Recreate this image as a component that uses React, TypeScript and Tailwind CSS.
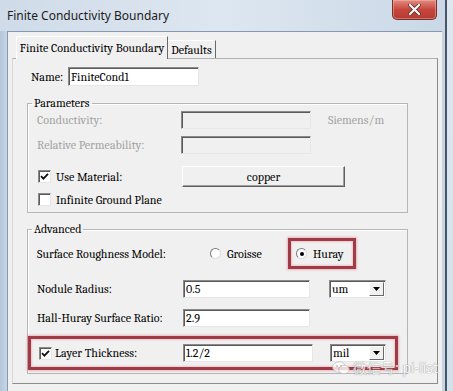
import React from "react";

const Sunken = ({ w, h, disabled, children }: { w: string; h: string; disabled?: boolean; children?: React.ReactNode }) => (
  <div
    className={`${w} ${h} flex items-center pl-[2px] border border-t-[#8a8a8a] border-l-[#8a8a8a] border-r-[#e6e6e6] border-b-[#e6e6e6] shadow-[inset_1px_1px_0_#5a5a5a] ${
      disabled ? "bg-[#f0f0f0]" : "bg-white"
    } text-[12px] leading-none text-black`}
  >
    {children}
  </div>
);

const Checkbox = ({ checked }: { checked?: boolean }) => (
  <div className="w-[13px] h-[13px] shrink-0 bg-white border border-t-[#8a8a8a] border-l-[#8a8a8a] border-r-[#e6e6e6] border-b-[#e6e6e6] shadow-[inset_1px_1px_0_#5a5a5a] flex items-center justify-center">
    {checked && (
      <svg width="9" height="9" viewBox="0 0 9 9">
        <path d="M1 4.2 L3.4 6.6 L8 1.8" stroke="#111" strokeWidth="1.8" fill="none" />
      </svg>
    )}
  </div>
);

const Radio = ({ on }: { on?: boolean }) => (
  <div className="w-[11px] h-[11px] shrink-0 rounded-full bg-white border border-t-[#7d7d7d] border-l-[#7d7d7d] border-r-[#dcdcdc] border-b-[#dcdcdc] flex items-center justify-center">
    {on && <div className="w-[4px] h-[4px] rounded-full bg-black" />}
  </div>
);

const Select = ({ w, h, value }: { w: string; h: string; value: string }) => (
  <div className={`${w} ${h} flex items-stretch bg-white border border-t-[#8a8a8a] border-l-[#8a8a8a] border-r-[#e6e6e6] border-b-[#e6e6e6] shadow-[inset_1px_1px_0_#5a5a5a]`}>
    <span className="flex-1 pl-[2px] flex items-center text-[12px] leading-none text-black">{value}</span>
    <div className="w-[15px] my-[1px] mr-[1px] bg-[#f0f0f0] border border-t-white border-l-white border-r-[#696969] border-b-[#696969] flex items-center justify-center">
      <svg width="7" height="4" viewBox="0 0 7 4">
        <path d="M0 0 H7 L3.5 4 Z" fill="#000" />
      </svg>
    </div>
  </div>
);

const Legend = ({ children }: { children: React.ReactNode }) => (
  <legend className="ml-[4px] px-[2px] text-[12px] leading-[14px] text-black">{children}</legend>
);

export default function App() {
  return (
    <div className="w-[453px] h-[391px] overflow-hidden relative flex bg-[#cbd8e6] font-serif">
      <div className="w-[445px] flex flex-col">
        {/* Title bar */}
        <div className="h-[31px] shrink-0 flex items-center pl-[7px] bg-gradient-to-r from-[#cfdbe8] via-[#dde7f1] to-[#cad8e6]">
          <span className="font-sans text-[12px] text-[#1c1c1c] leading-none">
            Finite Conductivity Boundary
          </span>
          <div className="ml-auto mr-[8px] self-start w-[45px] h-[20px] rounded-b-[5px] border border-t-0 border-[#7a2f2f] bg-gradient-to-b from-[#e08a80] via-[#c8473d] to-[#b53a33] flex items-center justify-center shadow-[inset_0_0_0_1px_rgba(255,200,190,0.4)]">
            <svg width="13" height="11" viewBox="0 0 13 11">
              <path d="M2 1 L11 10 M11 1 L2 10" stroke="#4a2020" strokeWidth="3.6" strokeLinecap="round" />
              <path d="M2 1 L11 10 M11 1 L2 10" stroke="#f4f4f4" strokeWidth="2.4" strokeLinecap="round" />
            </svg>
          </div>
        </div>

        <div className="flex flex-1">
          <div className="w-[7px] bg-gradient-to-r from-[#b4c6da] to-[#c7d6e5]" />
          {/* Client area */}
          <div className="w-[435px] bg-[#f0f0f0] border-l border-t border-[#8799ae] pt-[4px] pl-[4px]">
            {/* Tabs */}
            <div className="flex items-end pl-[4px] relative z-10 -mb-[1px]">
              <div className="w-[152px] h-[23px] bg-[#f0f0f0] border-t border-l border-white border-r border-r-[#696969] rounded-tl-[2px] flex items-center justify-center text-[12px] leading-none text-black">
                Finite Conductivity Boundary
              </div>
              <div className="w-[48px] h-[18px] mb-[1px] border-t border-white border-r border-r-[#696969] flex items-center justify-center text-[12px] leading-none text-black">
                Defaults
              </div>
            </div>

            {/* Panel */}
            <div className="w-[426px] border border-t-[#b0b0b0] border-l-[#d8d8d8] border-r-[#8c8c8c] border-b-[#8c8c8c] bg-[#f0f0f0] pt-[8px] pb-[9px]">
              <div className="flex items-center h-[19px] pl-[18px]">
                <span className="w-[37px] text-[12px] leading-none text-black">Name:</span>
                <Sunken w="w-[131px]" h="h-[19px]">FiniteCond1</Sunken>
              </div>

              {/* Parameters */}
              <fieldset className="ml-[14px] mt-[10px] w-[381px] border border-[#b6b6b6] shadow-[inset_1px_1px_0_#ffffff]">
                <Legend>Parameters</Legend>
                <div className="pl-[9px] pb-[6px] flex flex-col">
                  <div className="mt-[1px] h-[18px] flex items-center">
                    <span className="w-[144px] text-[12px] leading-none text-[#a3a3a3]">Conductivity:</span>
                    <Sunken w="w-[130px]" h="h-[18px]" disabled />
                    <span className="ml-[17px] text-[12px] leading-none text-[#a3a3a3]">Siemens/m</span>
                  </div>
                  <div className="mt-[7px] h-[17px] flex items-center">
                    <span className="w-[144px] text-[12px] leading-none text-[#a3a3a3]">Relative Permeability:</span>
                    <Sunken w="w-[130px]" h="h-[18px]" disabled />
                  </div>
                  <div className="mt-[13px] h-[21px] flex items-center">
                    <div className="w-[145px] flex items-center pl-[1px]">
                      <Checkbox checked />
                      <span className="ml-[5px] text-[12px] leading-none text-black">Use Material:</span>
                    </div>
                    <div className="w-[163px] h-[21px] bg-[#f0f0f0] border border-t-white border-l-white border-r-[#5f5f5f] border-b-[#5f5f5f] shadow-[inset_-1px_-1px_0_#a0a0a0] flex items-center justify-center text-[12px] leading-none text-black">
                      copper
                    </div>
                  </div>
                  <div className="mt-[6px] h-[13px] flex items-center pl-[1px]">
                    <Checkbox />
                    <span className="ml-[5px] text-[12px] leading-none text-black">Infinite Ground Plane</span>
                  </div>
                </div>
              </fieldset>

              {/* Advanced */}
              <fieldset className="ml-[14px] mt-[9px] w-[381px] border border-[#b6b6b6] shadow-[inset_1px_1px_0_#ffffff]">
                <Legend>Advanced</Legend>
                <div className="pl-[9px] pb-[3px] flex flex-col">
                  <div className="mt-[2px] h-[31px] flex items-center">
                    <span className="w-[173px] text-[12px] leading-none text-black">Surface Roughness Model:</span>
                    <div className="w-[78px] flex items-center">
                      <Radio />
                      <span className="ml-[6px] text-[12px] leading-none text-black">Groisse</span>
                    </div>
                    <div className="w-[68px] h-[31px] border-[3px] border-[#a13a45] shadow-[0_0_2px_1px_rgba(214,120,130,0.45),inset_0_0_2px_1px_rgba(214,120,130,0.35)] flex items-center pl-[5px]">
                      <Radio on />
                      <span className="ml-[6px] text-[12px] leading-none text-black">Huray</span>
                    </div>
                  </div>
                  <div className="mt-[11px] h-[18px] flex items-center">
                    <span className="w-[146px] text-[12px] leading-none text-black">Nodule Radius:</span>
                    <Sunken w="w-[127px]" h="h-[18px]">0.5</Sunken>
                    <div className="ml-[19px]">
                      <Select w="w-[57px]" h="h-[18px]" value="um" />
                    </div>
                  </div>
                  <div className="mt-[11px] h-[17px] flex items-center">
                    <span className="w-[146px] text-[12px] leading-none text-black">Hall-Huray Surface Ratio:</span>
                    <Sunken w="w-[127px]" h="h-[18px]">2.9</Sunken>
                  </div>
                  <div className="mt-[10px] -ml-[9px] w-[370px] h-[34px] border-[3px] border-[#a13a45] shadow-[0_0_2px_1px_rgba(214,120,130,0.45),inset_0_0_2px_1px_rgba(214,120,130,0.35)] flex items-center pl-[8px]">
                    <div className="w-[144px] flex items-center">
                      <Checkbox checked />
                      <span className="ml-[3px] text-[12px] leading-none text-black">Layer Thickness:</span>
                    </div>
                    <Sunken w="w-[130px]" h="h-[18px]">1.2/2</Sunken>
                    <div className="ml-[17px]">
                      <Select w="w-[56px]" h="h-[18px]" value="mil" />
                    </div>
                  </div>
                </div>
              </fieldset>
            </div>
          </div>
          <div className="w-[3px] bg-[#c6d4e3]" />
        </div>
      </div>
      <div className="w-[2px] bg-[#46566a]" />
      <div className="w-[6px] bg-gradient-to-b from-[#dfe7ef] to-[#d5e0ea]" />

      {/* Watermark */}
      <div className="absolute left-[332px] top-[361px] flex items-center gap-[3px] opacity-80 pointer-events-none">
        <svg width="18" height="14" viewBox="0 0 18 14">
          <ellipse cx="7" cy="6" rx="6.5" ry="5.2" fill="#ffffff" stroke="#b8b8b8" strokeWidth="0.8" />
          <ellipse cx="12" cy="8.5" rx="5.3" ry="4.3" fill="#ffffff" stroke="#b8b8b8" strokeWidth="0.8" />
          <circle cx="5" cy="5" r="0.9" fill="#b8b8b8" />
          <circle cx="9" cy="5" r="0.9" fill="#b8b8b8" />
        </svg>
        <span className="font-sans text-[14px] leading-none text-white [text-shadow:0_0_1px_#8a8a8a,0_0_1px_#8a8a8a]">
          微信号: pi-list
        </span>
      </div>
    </div>
  );
}
